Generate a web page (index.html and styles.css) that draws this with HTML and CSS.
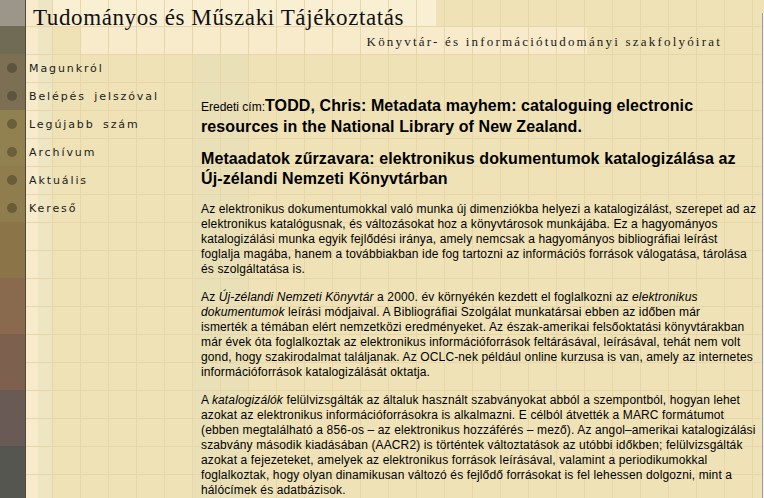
FILE: index.html
```html
<!DOCTYPE html>
<html lang="hu">
<head>
<meta charset="utf-8">
<title>Tudományos és Műszaki Tájékoztatás</title>
<link rel="stylesheet" href="styles.css">
</head>
<body>
<div class="page">
  <header class="masthead">
    <h1 class="site-title">Tudományos és Műszaki Tájékoztatás</h1>
    <p class="site-sub">Könyvtár- és információtudományi szakfolyóirat</p>
  </header>
  <div class="body-row">
    <nav class="menu">
      <a class="menu-item" href="#"><span class="dot"></span><span class="label">Magunkról</span></a>
      <a class="menu-item" href="#"><span class="dot"></span><span class="label">Belépés jelszóval</span></a>
      <a class="menu-item" href="#"><span class="dot"></span><span class="label">Legújabb szám</span></a>
      <a class="menu-item" href="#"><span class="dot"></span><span class="label">Archívum</span></a>
      <a class="menu-item" href="#"><span class="dot"></span><span class="label">Aktuális</span></a>
      <a class="menu-item" href="#"><span class="dot"></span><span class="label">Kereső</span></a>
    </nav>
    <main class="article">
      <p class="orig"><span class="orig-label">Eredeti cím:</span>TODD, Chris: Metadata mayhem: cataloguing electronic<br>resources in the National Library of New Zealand.</p>
      <h2 class="art-title">Metaadatok zűrzavara: elektronikus dokumentumok katalogizálása az<br>Új-zélandi Nemzeti Könyvtárban</h2>
      <p class="para">Az elektronikus dokumentumokkal való munka új dimenziókba helyezi a katalogizálást, szerepet ad az<br>elektronikus katalógusnak, és változásokat hoz a könyvtárosok munkájába. Ez a hagyományos<br>katalogizálási munka egyik fejlődési iránya, amely nemcsak a hagyományos bibliográfiai leírást<br>foglalja magába, hanem a továbbiakban ide fog tartozni az információs források válogatása, tárolása<br>és szolgáltatása is.</p>
      <p class="para">Az <em>Új-zélandi Nemzeti Könyvtár</em> a 2000. év környékén kezdett el foglalkozni az <em>elektronikus<br>dokumentumok</em> leírási módjaival. A Bibliográfiai Szolgálat munkatársai ebben az időben már<br>ismerték a témában elért nemzetközi eredményeket. Az észak-amerikai felsőoktatási könyvtárakban<br>már évek óta foglalkoztak az elektronikus információforrások feltárásával, leírásával, tehát nem volt<br>gond, hogy szakirodalmat találjanak. Az OCLC-nek például online kurzusa is van, amely az internetes<br>információforrások katalogizálását oktatja.</p>
      <p class="para">A <em>katalogizálók</em> felülvizsgálták az általuk használt szabványokat abból a szempontból, hogyan lehet<br>azokat az elektronikus információforrásokra is alkalmazni. E célból átvették a MARC formátumot<br>(ebben megtalálható a 856-os – az elektronikus hozzáférés – mező). Az angol–amerikai katalogizálási<br>szabvány második kiadásában (AACR2) is történtek változtatások az utóbbi időkben; felülvizsgálták<br>azokat a fejezeteket, amelyek az elektronikus források leírásával, valamint a periodikumokkal<br>foglalkoztak, hogy olyan dinamikusan változó és fejlődő forrásokat is fel lehessen dolgozni, mint a<br>hálócímek és adatbázisok.</p>
    </main>
  </div>
</div>
</body>
</html>
```

FILE: styles.css
```css
html, body {
  margin: 0;
  padding: 0;
  height: 100%;
}

body {
  font-family: "Liberation Sans", Arial, sans-serif;
  color: #000;
  background-color: #efe2b6;
  background-image:
    linear-gradient(#9c9cb6, #9c9cb6),
    linear-gradient(#f2f2f4, #f2f2f4),
    linear-gradient(to bottom,
      #9b9689 0 26px, #6f6b55 26px 54px, #7d6f54 54px 110px,
      #928150 110px 166px, #8f7d4d 166px 222px, #8a7448 222px 278px,
      #896a4f 278px 334px, #7e604f 334px 390px, #6a5a55 390px 446px,
      #555650 446px 100%),
    linear-gradient(#4f4a3a, #4f4a3a),
    repeating-linear-gradient(to bottom, #e6d6aa 0 1px, transparent 1px 28px),
    repeating-linear-gradient(to right, #e6d6aa 0 1px, transparent 1px 28px),
    linear-gradient(#f7ebcc, #f7ebcc),
    linear-gradient(#eee6c3, #eee6c3),
    linear-gradient(#f9efd2, #f9efd2),
    linear-gradient(#f7ebcb, #f7ebcb),
    linear-gradient(#eae0b8, #eae0b8);
  background-size:
    1px 100%,
    1px 100%,
    25px 100%,
    1px 100%,
    100% 100%,
    100% 100%,
    12px 100%,
    14px 100%,
    410px 26px,
    507px 28px,
    56px 100%;
  background-position:
    762px 13px,
    763px 13px,
    0 0,
    25px 0,
    0 26px,
    24px 0,
    26px 0,
    38px 0,
    26px 0,
    80px 26px,
    192px 54px;
  background-repeat: no-repeat;
}

.page {
  width: 764px;
  min-height: 498px;
}

.masthead {
  height: 54px;
  padding-left: 33px;
  padding-right: 42px;
  box-sizing: border-box;
}

.site-title {
  margin: 0;
  padding-top: 4px;
  font-family: "Liberation Serif", "Times New Roman", serif;
  font-weight: normal;
  font-size: 23px;
  line-height: 28px;
  letter-spacing: 0.6px;
  color: #111;
  white-space: nowrap;
}

.site-sub {
  margin: 1px 0 0;
  text-align: right;
  font-family: "Liberation Serif", "Times New Roman", serif;
  font-size: 13px;
  line-height: 17px;
  letter-spacing: 2.2px;
  color: #1a1a1a;
  white-space: nowrap;
}

.body-row {
  display: flex;
  align-items: flex-start;
}

.menu {
  flex: 0 0 201px;
  display: flex;
  flex-direction: column;
}

.menu-item {
  display: flex;
  align-items: center;
  height: 28px;
  text-decoration: none;
  color: #1b1b1b;
}

.dot {
  flex: 0 0 10px;
  height: 10px;
  margin-left: 7px;
  margin-right: 9px;
  border-radius: 50%;
  background: rgba(45, 40, 25, 0.38);
}

.label {
  padding-left: 3px;
  padding-top: 1px;
  font-family: "DejaVu Sans", Verdana, sans-serif;
  font-size: 11px;
  letter-spacing: 1.9px;
  word-spacing: 3px;
  white-space: nowrap;
}

.article {
  flex: 1 1 auto;
  padding: 42px 0 0 0;
  min-width: 0;
}

.orig {
  margin: 0;
  font-size: 16px;
  font-weight: bold;
  line-height: 20px;
  letter-spacing: 0.1px;
  white-space: nowrap;
}

.orig-label {
  font-size: 12px;
  font-weight: normal;
  letter-spacing: 0;
}

.art-title {
  margin: 12px 0 0;
  font-size: 16px;
  font-weight: bold;
  line-height: 20px;
  letter-spacing: 0.1px;
  white-space: nowrap;
}

.para {
  margin: 13px 0 0;
  font-size: 12px;
  line-height: 15px;
  letter-spacing: 0.13px;
  white-space: nowrap;
}
```
